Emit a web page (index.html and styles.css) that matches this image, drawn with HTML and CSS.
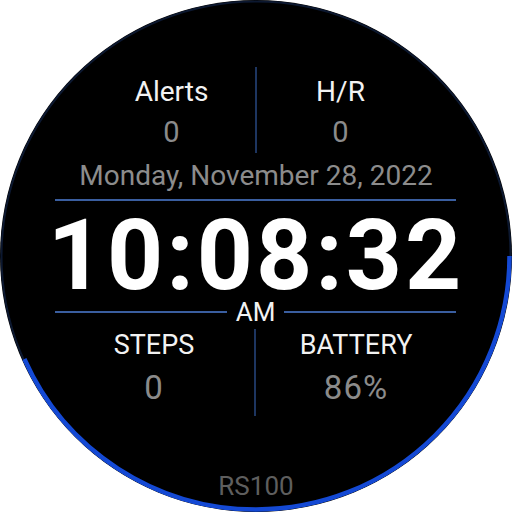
FILE: index.html
```html
<!DOCTYPE html>
<html>
<head>
<meta charset="utf-8">
<link rel="stylesheet" href="styles.css">
</head>
<body>
<div class="face">
  <svg class="ring" width="512" height="512" viewBox="0 0 512 512">
    <circle cx="256" cy="256" r="254.5" fill="none" stroke="#0c1830" stroke-width="2"/>
    <circle cx="256" cy="256" r="253.5" fill="none" stroke="#1449d4" stroke-width="4.5" stroke-dasharray="690 2000"/>
  </svg>
  <div class="row top">
    <div class="cell">
      <div class="label">Alerts</div>
      <div class="value">0</div>
    </div>
    <div class="divider"></div>
    <div class="cell">
      <div class="label">H/R</div>
      <div class="value">0</div>
    </div>
  </div>
  <div class="date">Monday, November 28, 2022</div>
  <div class="rule"></div>
  <div class="time">10:08:32</div>
  <div class="ampm">
    <div class="rule-part"></div>
    <div class="am">AM</div>
    <div class="rule-part"></div>
  </div>
  <div class="row bottom">
    <div class="cell">
      <div class="label">STEPS</div>
      <div class="value big">0</div>
    </div>
    <div class="divider"></div>
    <div class="cell">
      <div class="label">BATTERY</div>
      <div class="value big">86%</div>
    </div>
  </div>
  <div class="brand">RS100</div>
</div>
</body>
</html>
```
FILE: styles.css
```css
html, body {
  margin: 0;
  padding: 0;
  background: #ffffff;
}
body {
  width: 512px;
  height: 512px;
  overflow: hidden;
  font-family: Roboto, "Liberation Sans", sans-serif;
}
.face {
  position: relative;
  width: 512px;
  height: 512px;
  border-radius: 50%;
  background: #000;
  overflow: hidden;
  display: flex;
  flex-direction: column;
  align-items: stretch;
}
.ring {
  position: absolute;
  left: 0;
  top: 0;
}
.row {
  display: grid;
  grid-template-columns: 1fr 2px 1fr;
}
.row.top {
  margin-top: 67px;
  padding: 0 88px;
  height: 86px;
}
.row.bottom {
  margin-top: 2px;
  padding: 0 56px 0 54px;
  height: 87px;
}
.divider {
  background: #1d3560;
}
.cell {
  display: flex;
  flex-direction: column;
  align-items: center;
}
.top .cell {
  padding-top: 9px;
  gap: 8px;
}
.bottom .cell {
  padding-top: 0;
  gap: 9px;
}
.label {
  color: #f2f2f2;
  font-size: 28px;
  line-height: 32px;
}
.bottom .label {
  font-size: 27px;
}
.value {
  color: #8b8b8b;
  font-size: 29px;
  line-height: 32px;
}
.value.big {
  font-size: 33px;
  line-height: 36px;
  letter-spacing: 1px;
}
.date {
  margin-top: 8px;
  text-align: center;
  color: #8c8c8c;
  font-size: 28px;
  line-height: 30px;
}
.rule {
  margin: 8px 56px 0 55px;
  height: 2px;
  background: #3a5e9f;
}
.time {
  margin-top: 15px;
  text-align: center;
  color: #ffffff;
  font-weight: 700;
  font-size: 98px;
  line-height: 80px;
  letter-spacing: 3px;
}
.ampm {
  margin-top: 1px;
  display: flex;
  align-items: center;
  gap: 9px;
  padding: 0 56px 0 55px;
}
.rule-part {
  flex: 1;
  height: 2px;
  background: #3a5e9f;
}
.am {
  color: #f2f2f2;
  font-size: 26px;
  line-height: 30px;
}
.brand {
  margin-top: 55px;
  text-align: center;
  color: #5e5e5e;
  font-size: 26px;
  line-height: 30px;
}
```
